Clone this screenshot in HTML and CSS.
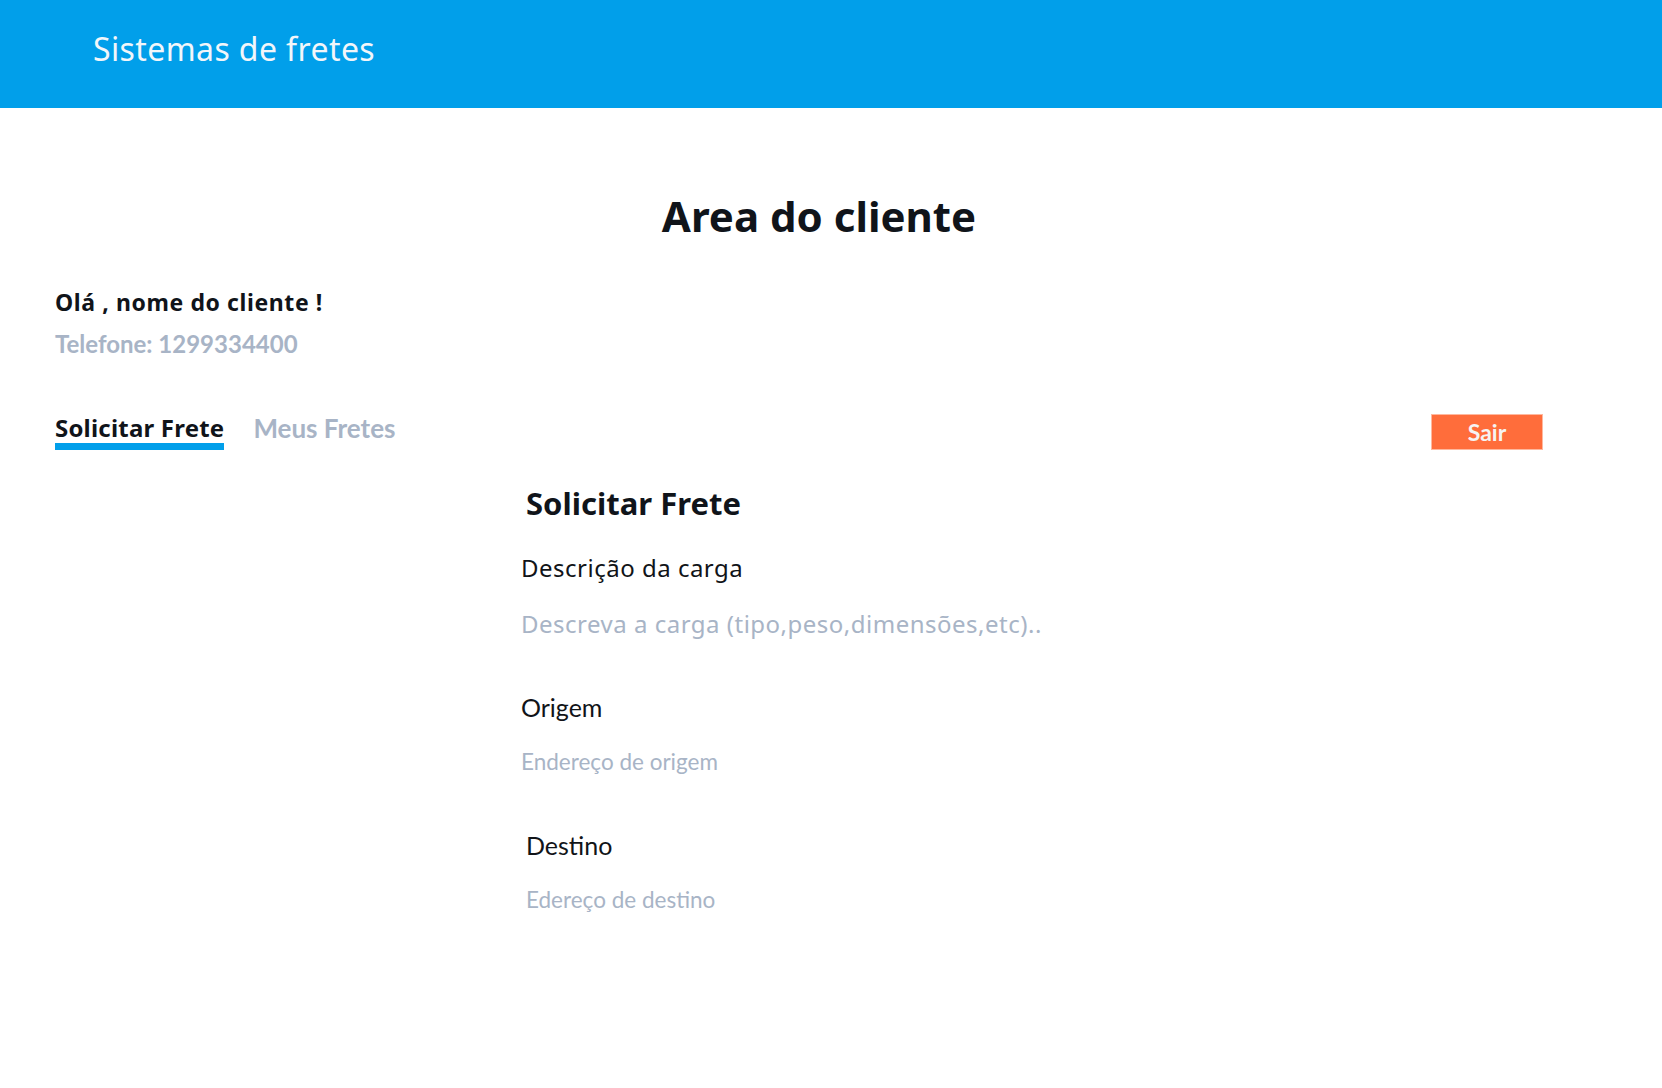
FILE: index.html
```html
<!DOCTYPE html>
<html lang="pt">
<head>
<meta charset="utf-8">
<title>Sistemas de fretes</title>
<link rel="stylesheet" href="styles.css">
</head>
<body>
<header class="topbar">
  <div class="brand">Sistemas de fretes</div>
</header>
<main class="page">
  <h1 class="page-title">Area do cliente</h1>
  <section class="client">
    <p class="client-name">Olá , nome do cliente !</p>
    <p class="client-phone">Telefone: 1299334400</p>
  </section>
  <nav class="tabs">
    <a class="tab tab-active">Solicitar Frete</a>
    <a class="tab tab-muted">Meus Fretes</a>
    <span class="spacer"></span>
    <button class="logout">Sair</button>
  </nav>
  <form class="freight-form">
    <h2 class="form-title">Solicitar Frete</h2>
    <div class="field field-desc">
      <label class="label label-noto">Descrição da carga</label>
      <div class="input input-noto">Descreva a carga (tipo,peso,dimensões,etc)..</div>
    </div>
    <div class="field field-origin">
      <label class="label">Origem</label>
      <div class="input">Endereço de origem</div>
    </div>
    <div class="field field-dest">
      <label class="label">Destino</label>
      <div class="input">Edereço de destino</div>
    </div>
  </form>
</main>
</body>
</html>
```

FILE: styles.css
```css
* { box-sizing: border-box; }
html, body { margin: 0; padding: 0; background: #ffffff; }
body { font-family: "Noto Sans", "Open Sans", sans-serif; color: #111418; }

.topbar {
  height: 108px;
  background: #019fea;
  padding: 29px 0 0 93px;
}
.brand {
  color: #f2f6fa;
  font-family: "Noto Sans", sans-serif;
  font-size: 32px;
  line-height: 40px;
  letter-spacing: 0.4px;
}

.page { padding: 0 55px; }

.page-title {
  margin: 80px 0 0;
  text-align: center;
  font-size: 42px;
  line-height: 56px;
  font-weight: 700;
  color: #10141a;
  padding-right: 24px;
}

.client { margin-top: 43px; }
.client p { margin: 0; }
.client-name {
  font-size: 23px;
  line-height: 30px;
  font-weight: 700;
  color: #10141a;
  letter-spacing: 0.6px;
}
.client-phone {
  margin-top: 12px !important;
  font-family: Lato, sans-serif;
  font-size: 24px;
  line-height: 30px;
  font-weight: 700;
  color: #a8b4c6;
}

.tabs {
  margin-top: 54px;
  display: flex;
  align-items: flex-start;
  padding-right: 64px;
}
.tab {
  font-size: 24px;
  line-height: 30px;
  font-weight: 700;
  margin-right: 29px;
}
.tab-active {
  color: #10141a;
  border-bottom: 7px solid #019fea;
  letter-spacing: 0.2px;
}
.tab-muted {
  font-family: Lato, sans-serif;
  color: #a8b4c6;
  font-size: 26px;
}
.spacer { flex: 1; }
.logout {
  margin-top: 1px;
  width: 112px;
  height: 36px;
  border: 1px solid #ffb89e;
  background: #ff6d3b;
  color: #f6f3f2;
  font-family: Lato, sans-serif;
  font-weight: 700;
  font-size: 23px;
  padding: 0;
}

.freight-form {
  width: 620px;
  margin: 33px auto 0;
}
.form-title {
  margin: 0 0 0 5px;
  font-size: 31px;
  line-height: 40px;
  font-weight: 700;
  color: #10141a;
}
.field-desc { margin-top: 30px; }
.field-origin { margin-top: 53px; }
.field-dest { margin-top: 53px; padding-left: 5px; }
.label {
  display: block;
  font-family: Lato, sans-serif;
  font-size: 25px;
  line-height: 30px;
  color: #111418;
}
.label-noto { font-family: "Noto Sans", sans-serif; font-size: 24px; letter-spacing: 0.5px; }
.input {
  margin-top: 25px;
  font-family: Lato, sans-serif;
  font-size: 22.5px;
  line-height: 30px;
  color: #a8b4c6;
}
.input-noto {
  margin-top: 26px;
  font-family: "Noto Sans", sans-serif;
  font-size: 24px;
  letter-spacing: 0.5px;
}
```
